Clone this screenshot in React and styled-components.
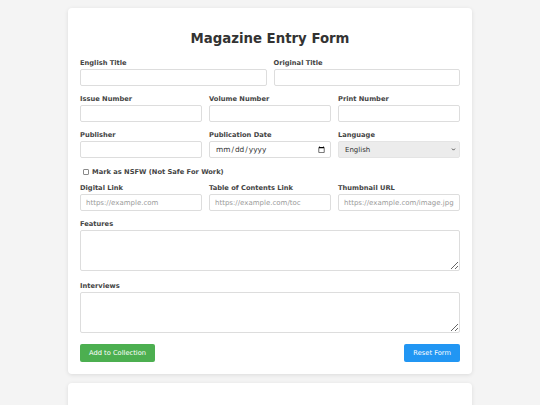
import React, {useState} from 'react';
import styled, {createGlobalStyle} from 'styled-components';
import {ChevronDown} from 'lucide-react';

const GlobalStyle = createGlobalStyle`
  html, body {
    margin: 0;
    padding: 0;
    background: #f4f4f4;
    font-family: "DejaVu Sans", Verdana, sans-serif;
    color: #333;
  }
`;

const Page = styled.div`
  padding: 8px 0;
`;

const Card = styled.div`
  width: 404px;
  box-sizing: border-box;
  margin: 0 auto 9px;
  padding: 12px;
  background: #fff;
  border-radius: 4px;
  box-shadow: 0 1px 4px rgba(0, 0, 0, 0.1);
  min-height: ${props => props.minHeight || 0}px;
`;

const Title = styled.h1`
  margin: 11px 0 12px;
  font-size: 13.3px;
  line-height: 16px;
  font-weight: bold;
  text-align: center;
  color: #333;
`;

const Row = styled.div`
  display: grid;
  grid-template-columns: repeat(${props => props.cols}, 1fr);
  column-gap: 7px;
`;

const Field = styled.div`
  margin-bottom: ${props => props.spacing || 9}px;
`;

const Label = styled.label`
  display: block;
  font-size: 6.7px;
  line-height: 8px;
  font-weight: bold;
  color: #444;
  margin-bottom: 2px;
`;

const Input = styled.input`
  display: block;
  width: 100%;
  height: 17px;
  box-sizing: border-box;
  padding: 0 5px;
  border: 1px solid #ddd;
  border-radius: 2px;
  background: #fff;
  font-family: "DejaVu Sans", Verdana, sans-serif;
  font-size: ${props => props.type === 'date' ? 7.4 : 7}px;
  color: #333;

  &::placeholder {
    color: #9a9a9a;
  }

  &::-webkit-calendar-picker-indicator {
    width: 7px;
    height: 7px;
    padding: 0;
    margin: 0;
  }
`;

const SelectWrap = styled.div`
  position: relative;

  svg {
    position: absolute;
    right: 4px;
    top: 6px;
    color: #333;
    pointer-events: none;
  }
`;

const Select = styled.select`
  display: block;
  width: 100%;
  height: 17px;
  box-sizing: border-box;
  padding: 0 6px;
  border: 1px solid #e4e4e4;
  border-radius: 2px;
  background-color: #ececec;
  appearance: none;
  font-family: "DejaVu Sans", Verdana, sans-serif;
  font-size: 7px;
  color: #333;
`;

const TextArea = styled.textarea`
  display: block;
  width: 100%;
  height: 41px;
  box-sizing: border-box;
  padding: 4px 5px;
  border: 1px solid #ddd;
  border-radius: 2px;
  font-family: "DejaVu Sans", Verdana, sans-serif;
  font-size: 7px;
  resize: vertical;
`;

const CheckRow = styled.label`
  display: flex;
  align-items: center;
  gap: 3px;
  height: 9px;
  margin: 0 0 8px 3px;
  font-size: 6.7px;
  font-weight: bold;
  color: #444;
`;

const Check = styled.input`
  appearance: none;
  width: 6px;
  height: 6px;
  margin: 0;
  border: 1px solid #8a8a8a;
  border-radius: 1px;
  background: #fff;

  &:checked {
    background: #2196f3;
    border-color: #2196f3;
  }
`;

const Actions = styled.div`
  display: flex;
  justify-content: space-between;
  margin-top: 11px;
`;

const Button = styled.button`
  height: 18px;
  padding: 0 9px;
  border: none;
  border-radius: 2px;
  background: ${props => props.color};
  color: #fff;
  font-family: "DejaVu Sans", Verdana, sans-serif;
  font-size: 6.7px;
  cursor: pointer;
`;

const emptyForm = {
    englishTitle: '',
    originalTitle: '',
    issueNumber: '',
    volumeNumber: '',
    printNumber: '',
    publisher: '',
    publicationDate: '',
    language: 'English',
    nsfw: false,
    digitalLink: '',
    tocLink: '',
    thumbnailUrl: '',
    features: '',
    interviews: '',
};

export default function App() {
    const [form, setForm] = useState(emptyForm);

    const update = (key) => (e) => {
        const value = e.target.type === 'checkbox' ? e.target.checked : e.target.value;
        setForm({...form, [key]: value});
    };

    return (
        <Page>
            <GlobalStyle/>
            <Card>
                <Title>Magazine Entry Form</Title>

                <Row cols={2}>
                    <Field>
                        <Label>English Title</Label>
                        <Input value={form.englishTitle} onChange={update('englishTitle')}/>
                    </Field>
                    <Field>
                        <Label>Original Title</Label>
                        <Input value={form.originalTitle} onChange={update('originalTitle')}/>
                    </Field>
                </Row>

                <Row cols={3}>
                    <Field>
                        <Label>Issue Number</Label>
                        <Input value={form.issueNumber} onChange={update('issueNumber')}/>
                    </Field>
                    <Field>
                        <Label>Volume Number</Label>
                        <Input value={form.volumeNumber} onChange={update('volumeNumber')}/>
                    </Field>
                    <Field>
                        <Label>Print Number</Label>
                        <Input value={form.printNumber} onChange={update('printNumber')}/>
                    </Field>
                </Row>

                <Row cols={3}>
                    <Field>
                        <Label>Publisher</Label>
                        <Input value={form.publisher} onChange={update('publisher')}/>
                    </Field>
                    <Field>
                        <Label>Publication Date</Label>
                        <Input type="date" value={form.publicationDate} onChange={update('publicationDate')}/>
                    </Field>
                    <Field>
                        <Label>Language</Label>
                        <SelectWrap>
                            <Select value={form.language} onChange={update('language')}>
                                <option>English</option>
                                <option>Japanese</option>
                                <option>French</option>
                                <option>Other</option>
                            </Select>
                            <ChevronDown size={5} strokeWidth={4}/>
                        </SelectWrap>
                    </Field>
                </Row>

                <CheckRow>
                    <Check type="checkbox" checked={form.nsfw} onChange={update('nsfw')}/>
                    Mark as NSFW (Not Safe For Work)
                </CheckRow>

                <Row cols={3}>
                    <Field>
                        <Label>Digital Link</Label>
                        <Input placeholder="https://example.com" value={form.digitalLink} onChange={update('digitalLink')}/>
                    </Field>
                    <Field>
                        <Label>Table of Contents Link</Label>
                        <Input placeholder="https://example.com/toc" value={form.tocLink} onChange={update('tocLink')}/>
                    </Field>
                    <Field>
                        <Label>Thumbnail URL</Label>
                        <Input placeholder="https://example.com/image.jpg" value={form.thumbnailUrl} onChange={update('thumbnailUrl')}/>
                    </Field>
                </Row>

                <Field spacing={11}>
                    <Label>Features</Label>
                    <TextArea value={form.features} onChange={update('features')}/>
                </Field>

                <Field spacing={0}>
                    <Label>Interviews</Label>
                    <TextArea value={form.interviews} onChange={update('interviews')}/>
                </Field>

                <Actions>
                    <Button color="#4caf50">Add to Collection</Button>
                    <Button color="#2196f3" onClick={() => setForm(emptyForm)}>Reset Form</Button>
                </Actions>
            </Card>

            <Card minHeight={200}/>
        </Page>
    );
}
